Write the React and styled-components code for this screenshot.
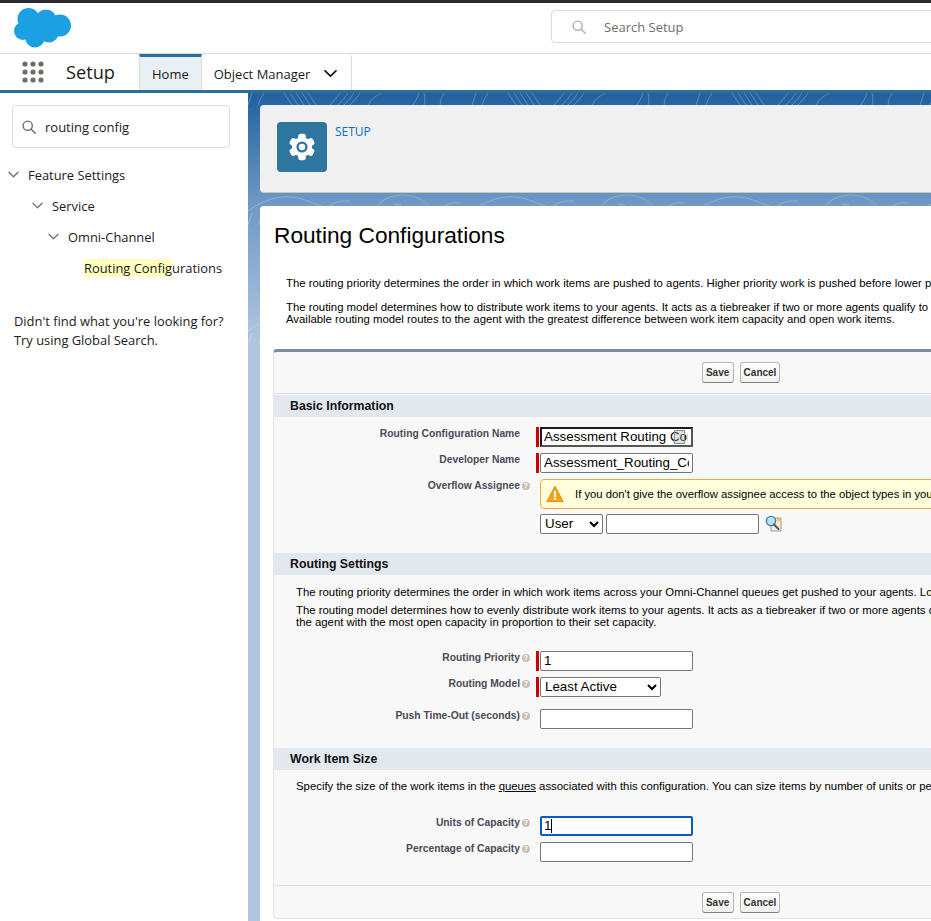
import React from 'react';
import styled, { createGlobalStyle } from 'styled-components';

const GlobalStyle = createGlobalStyle`
  html, body {
    margin: 0;
    padding: 0;
    background: #fff;
  }
`;

const Page = styled.div`
  width: 931px;
  height: 921px;
  overflow: hidden;
  display: flex;
  flex-direction: column;
  font-family: "Open Sans", "Noto Sans", sans-serif;
  color: #1a1a1a;
  border-top: 3px solid #2b2b2f;
  box-sizing: border-box;
`;

const Header = styled.header`
  flex: none;
  height: 50px;
  display: flex;
  align-items: center;
  padding-left: 14px;
  border-bottom: 1px solid #dddbda;
`;

const LogoMark = styled.svg`
  flex: none;
`;

const GlobalSearch = styled.div`
  margin-left: 479px;
  flex: none;
  width: 500px;
  height: 33px;
  box-sizing: border-box;
  margin-top: -3px;
  border: 1px solid #dddbda;
  border-radius: 4px;
  display: flex;
  align-items: center;
  padding-left: 20px;
  gap: 18px;
  font-size: 13px;
  color: #706e6b;
`;

const Nav = styled.nav`
  flex: none;
  height: 36px;
  display: flex;
  border-bottom: 3px solid #2a7099;
`;

const AppLauncher = styled.div`
  width: 139px;
  flex: none;
  display: flex;
  align-items: center;
  padding-left: 22px;
  gap: 22px;
  box-sizing: border-box;
  font-size: 18.2px;
`;

const Tab = styled.div`
  display: flex;
  align-items: center;
  gap: 14px;
  padding: ${p => (p.$active ? '0 12px' : '0 14px 0 12px')};
  font-size: 13px;
  box-sizing: border-box;
  border-right: 1px solid #dddbda;
  border-top: 3px solid ${p => (p.$active ? '#2a7099' : 'transparent')};
  background: ${p => (p.$active ? '#e8f0f4' : '#fff')};
  border-left: ${p => (p.$active ? '1px solid #dddbda' : '0')};
`;

const Body = styled.div`
  flex: 1;
  min-height: 0;
  display: flex;
`;

const Sidebar = styled.aside`
  flex: none;
  width: 248px;
  padding: 12px 18px 0 12px;
  box-sizing: border-box;
  background: #fff;
`;

const TreeSearch = styled.div`
  height: 43px;
  box-sizing: border-box;
  border: 1px solid #dddbda;
  border-radius: 4px;
  display: flex;
  align-items: center;
  gap: 9px;
  padding-left: 9px;
  font-size: 13px;
`;

const Tree = styled.ul`
  list-style: none;
  margin: 11px 0 0 -12px;
  padding: 0;
`;

const TreeItem = styled.li`
  height: 31px;
  display: flex;
  align-items: center;
  font-size: 12.9px;
  padding-left: ${p => p.$indent}px;
  gap: 9px;
`;

const Highlight = styled.mark`
  background: #ffffbe;
  color: inherit;
`;

const NotFound = styled.p`
  margin: 29px 0 0 2px;
  font-size: 12.9px;
  line-height: 19px;
  white-space: nowrap;
`;

const Content = styled.main`
  position: relative;
  flex: 1;
  min-width: 0;
  padding: 12px 0 0 12px;
  background: linear-gradient(#20619f 0, #6f98c4 110px, #b0c6e0 250px, #b0c6e0 100%);
  font-family: "Liberation Sans", Arial, sans-serif;
`;

const Contours = styled.svg`
  position: absolute;
  top: 0;
  left: 0;
  width: 100%;
  height: 250px;
`;

const SetupCard = styled.section`
  position: relative;
  width: 900px;
  height: 88px;
  box-sizing: border-box;
  padding: 17px;
  display: flex;
  gap: 8px;
  background: #f0f0f0;
  border-radius: 4px;
  border-bottom: 1px solid #c9c9c9;
`;

const SetupIcon = styled.div`
  flex: none;
  width: 50px;
  height: 50px;
  border-radius: 4px;
  background: #2e759f;
  display: flex;
  align-items: center;
  justify-content: center;
`;

const SetupLink = styled.a`
  font-size: 12px;
  line-height: 20px;
  color: #0a6fc9;
  font-family: "Open Sans", sans-serif;
`;

const MainCard = styled.section`
  position: relative;
  width: 950px;
  margin-top: 13px;
  padding: 0 0 0 13px;
  background: #fff;
  border-radius: 4px 0 0 0;
  height: 720px;
`;

const Title = styled.h1`
  margin: 0 0 0 1px;
  padding-top: 16px;
  font-size: 22.7px;
  line-height: 27px;
  font-weight: 400;
  color: #000;
`;

const Intro = styled.div`
  padding: 28px 0 0 13px;
  font-size: 11.36px;
  line-height: 12px;
  color: #000;
  white-space: nowrap;
`;

const IntroPara = styled.p`
  margin: 0 0 12px;
`;

const Form = styled.div`
  width: 936px;
  margin-top: 24px;
  height: 570px;
  box-sizing: border-box;
  background: #f8f8f8;
  border: 1px solid #e5e5e5;
  border-top: 3px solid #7b8aa6;
  border-radius: 4px;
`;

const ButtonBar = styled.div`
  display: flex;
  justify-content: center;
  align-items: center;
  gap: 6px;
  height: ${p => p.$height}px;
  margin-top: ${p => p.$top || 0}px;
  border-${p => p.$line}: 1px solid #dcdcdc;
`;

const Button = styled.button`
  height: 21px;
  min-width: 32px;
  padding: 0 3px;
  font: bold 10px "Liberation Sans", Arial, sans-serif;
  color: #333;
  background: linear-gradient(#fff, #f0f0f0);
  border: 1px solid #b5b5b5;
  border-bottom-color: #7f7f7f;
  border-radius: 3px;
`;

const SectionHeader = styled.h2`
  margin: ${p => p.$top}px 0 0;
  height: 22px;
  padding-left: 16px;
  font-size: 12.3px;
  line-height: 22px;
  font-weight: bold;
  color: #111;
  background: #e3e7ee;
`;

const SectionText = styled.div`
  padding: ${p => p.$top}px 0 0 22px;
  font-size: 11.36px;
  line-height: 12px;
  color: #000;
  white-space: nowrap;
`;

const SectionPara = styled.p`
  margin: 0 0 6px;
`;

const QueueLink = styled.span`
  text-decoration: underline;
`;

const Row = styled.div`
  display: grid;
  grid-template-columns: 246px 16px 4px 1fr;
  margin-top: ${p => p.$top}px;
`;

const Label = styled.label`
  padding-top: 1px;
  text-align: right;
  font-size: 10.3px;
  line-height: 12px;
  font-weight: bold;
  color: #4a4a56;
  white-space: nowrap;
`;

const HelpSlot = styled.div`
  padding: 3px 0 0 2px;
`;

const HelpDot = styled.span`
  display: block;
  width: 8px;
  height: 8px;
  border-radius: 50%;
  background: #cbbfae;
  color: #fff;
  font-size: 7px;
  line-height: 8px;
  font-weight: bold;
  text-align: center;
`;

const RequiredBar = styled.div`
  width: 3px;
  margin-left: -0.5px;
  height: 20px;
  background: ${p => (p.$on ? '#c00' : 'transparent')};
`;

const Field = styled.div`
  position: relative;
  display: flex;
  flex-direction: column;
  gap: 5px;
  min-width: 0;
`;

const TextInput = styled.input`
  display: block;
  width: 153px;
  height: 20px;
  box-sizing: border-box;
  font: 13.33px "Liberation Sans", Arial, sans-serif;
  color: #000;
  background: #fff;
  outline: none;
  border: ${p => (p.$focus === 'blue' ? '2px solid #0b5cc0' : p.$focus === 'dark' ? '2px solid #555' : '1px solid #767676')};
  border-top-color: ${p => (p.$focus === 'dark' ? '#1c1c1c' : undefined)};
  border-left-color: ${p => (p.$focus === 'dark' ? '#1c1c1c' : undefined)};
  border-radius: ${p => (p.$focus === 'dark' ? 0 : 2)}px;
  padding: 0 3px 2px ${p => (p.$focus ? 2 : 3)}px;
`;

const Select = styled.select`
  display: block;
  width: ${p => p.$width}px;
  height: 20px;
  box-sizing: border-box;
  padding: 0 0 2px;
  font: 13.33px "Liberation Sans", Arial, sans-serif;
  color: #000;
  background-color: #fff;
  border: 1px solid #767676;
  border-radius: 2px;
`;

const FillBadge = styled.span`
  position: absolute;
  left: 134px;
  top: 3px;
  width: 11px;
  height: 14px;
  box-sizing: border-box;
  border: 1px solid #8d8d8d;
  background: rgba(170, 170, 170, 0.35);
`;

const Caret = styled.span`
  position: absolute;
  left: 11px;
  top: 3px;
  width: 1px;
  height: 14px;
  background: #000;
`;

const Warning = styled.div`
  width: 500px;
  height: 30px;
  box-sizing: border-box;
  display: flex;
  align-items: center;
  gap: 11px;
  padding-left: 5px;
  font-size: 11.3px;
  color: #000;
  white-space: nowrap;
  background: #ffffdc;
  border: 1px solid #f9a43a;
  border-radius: 4px;
`;

const WarningMark = styled.svg`
  flex: none;
`;

const LookupRow = styled.div`
  display: flex;
  align-items: center;
  gap: 3px;
`;

const LookupIcon = styled.svg`
  flex: none;
  margin-left: 3px;
`;

const SearchIcon = ({ size = 14, color = '#706e6b' }) => (
  <svg width={size} height={size} viewBox="0 0 14 14" fill="none" stroke={color} strokeWidth="1.4">
    <circle cx="5.7" cy="5.7" r="4.6" />
    <path d="M9 9l4.2 4.2" strokeLinecap="round" />
  </svg>
);

const Chevron = ({ size = 11, color = '#706e6b', width = 1.3 }) => (
  <svg width={size} height={size} viewBox="0 0 12 12" fill="none" stroke={color} strokeWidth={width}>
    <path d="M1 3.5l5 5 5-5" strokeLinecap="round" strokeLinejoin="round" />
  </svg>
);

const Logo = () => (
  <LogoMark width="58" height="40" viewBox="14 8 58 40" fill="#1ba1e2">
    <circle cx="28.5" cy="19" r="11" />
    <circle cx="46" cy="20" r="10.5" />
    <circle cx="60" cy="25.5" r="11" />
    <circle cx="23" cy="31" r="9" />
    <circle cx="35" cy="37.5" r="10" />
    <circle cx="49" cy="33" r="9.5" />
    <ellipse cx="40" cy="27" rx="16" ry="11" />
  </LogoMark>
);

const Waffle = () => (
  <svg width="22" height="22" viewBox="0 0 22 22" fill="#706e6b">
    {[3, 11, 19].flatMap(y => [3, 11, 19].map(x => <circle key={`${x}-${y}`} cx={x} cy={y} r="2.6" />))}
  </svg>
);

const Gear = () => (
  <svg width="28" height="28" viewBox="0 0 28 28">
    <g fill="#fff">
      {[0, 60, 120, 180, 240, 300].map(a => (
        <rect key={a} x="10.2" y="0.8" width="7.6" height="8" rx="2.6" transform={`rotate(${a} 14 14)`} />
      ))}
      <circle cx="14" cy="14" r="10" />
    </g>
    <circle cx="14" cy="14" r="4.4" fill="none" stroke="#2e759f" strokeWidth="2.4" />
  </svg>
);

const WarningIcon = () => (
  <WarningMark width="18" height="18" viewBox="0 0 18 18">
    <path d="M9 1.2L17.2 16.6H.8z" fill="#f7a11d" stroke="#e98c0c" strokeWidth="1" strokeLinejoin="round" />
    <rect x="8" y="6" width="2" height="6" fill="#fff" />
    <rect x="8" y="13" width="2" height="2" fill="#fff" />
  </WarningMark>
);

const Lookup = () => (
  <LookupIcon width="17" height="18" viewBox="0 0 17 18">
    <path d="M6 3h10v13H6z" fill="#f4efdc" stroke="#9a9a9a" strokeWidth="1" />
    <path d="M12 3h4v3h-4z" fill="#f2c04e" />
    <circle cx="6" cy="6" r="4.6" fill="#bfe0f2" stroke="#3d7fa8" strokeWidth="1.4" />
    <path d="M9 9.5l4.5 4.5" stroke="#555" strokeWidth="2" strokeLinecap="round" />
  </LookupIcon>
);

const Help = () => <HelpDot>?</HelpDot>;

const FormRow = ({ top, label, help, required, children }) => (
  <Row $top={top}>
    <Label>{label}</Label>
    <HelpSlot>{help && <Help />}</HelpSlot>
    <RequiredBar $on={required} />
    <Field>{children}</Field>
  </Row>
);

const Buttons = ({ height, line, top }) => (
  <ButtonBar $height={height} $line={line} $top={top}>
    <Button>Save</Button>
    <Button>Cancel</Button>
  </ButtonBar>
);

export default function App() {
  return (
    <Page>
      <GlobalStyle />
      <Header>
        <Logo />
        <GlobalSearch>
          <SearchIcon color="#b0adab" />
          Search Setup
        </GlobalSearch>
      </Header>
      <Nav>
        <AppLauncher>
          <Waffle />
          Setup
        </AppLauncher>
        <Tab $active>Home</Tab>
        <Tab>
          Object Manager
          <Chevron size={13} color="#1a1a1a" width={1.6} />
        </Tab>
      </Nav>
      <Body>
        <Sidebar>
          <TreeSearch>
            <SearchIcon />
            routing config
          </TreeSearch>
          <Tree>
            <TreeItem $indent={8}><Chevron />Feature Settings</TreeItem>
            <TreeItem $indent={32}><Chevron />Service</TreeItem>
            <TreeItem $indent={48}><Chevron />Omni-Channel</TreeItem>
            <TreeItem $indent={84}><span><Highlight>Routing Config</Highlight>urations</span></TreeItem>
          </Tree>
          <NotFound>
            Didn't find what you're looking for?
            <br />
            Try using Global Search.
          </NotFound>
        </Sidebar>
        <Content>
          <Contours aria-hidden="true">
            <defs>
              <pattern id="contour" width="224" height="120" patternUnits="userSpaceOnUse">
                <g fill="none" stroke="rgba(255,255,255,0.25)" strokeWidth="1">
                  <path d="M4 0q-2 6-4 12M16 0q-4 6-6 12M36 0q4 6 8 12M42 0q4 6 8 12M48 0q4 6 8 12M54 0q4 6 8 12M60 0q4 6 8 12M82 12q6-6 10-12M90 12q6-6 10-12M96 12q6-6 10-12M102 12q6-6 10-12M120 12q4-8 14-12M165 12q4-6 6-12M176 0q2 6 0 12M196 0q-4 6-4 12" />
                  <path d="M0 118q30-22 60-10t50 12M74 120q10-14 28-12M125 120q8-18 30-18t30 18M190 120q6-12 22-10" />
                  <circle cx="150" cy="114" r="3" />
                </g>
              </pattern>
            </defs>
            <rect width="100%" height="100%" fill="url(#contour)" />
          </Contours>
          <SetupCard>
            <SetupIcon><Gear /></SetupIcon>
            <SetupLink>SETUP</SetupLink>
          </SetupCard>
          <MainCard>
            <Title>Routing Configurations</Title>
            <Intro>
              <IntroPara>The routing priority determines the order in which work items are pushed to agents. Higher priority work is pushed before lower priority work.</IntroPara>
              <IntroPara>
                The routing model determines how to distribute work items to your agents. It acts as a tiebreaker if two or more agents qualify to receive the work item.
                <br />
                Available routing model routes to the agent with the greatest difference between work item capacity and open work items.
              </IntroPara>
            </Intro>
            <Form>
              <Buttons height={41} line="bottom" />
              <SectionHeader $top={1}>Basic Information</SectionHeader>
              <FormRow top={10} label="Routing Configuration Name" required>
                <TextInput readOnly $focus="dark" value="Assessment Routing Configuration" />
                <FillBadge />
              </FormRow>
              <FormRow top={6} label="Developer Name" required>
                <TextInput readOnly value="Assessment_Routing_Configuration" />
              </FormRow>
              <FormRow top={6} label="Overflow Assignee" help>
                <Warning>
                  <WarningIcon />
                  If you don't give the overflow assignee access to the object types in your queues, work items can't be routed.
                </Warning>
                <LookupRow>
                  <Select $width={63} defaultValue="User">
                    <option>User</option>
                    <option>Queue</option>
                  </Select>
                  <TextInput readOnly value="" />
                  <Lookup />
                </LookupRow>
              </FormRow>
              <SectionHeader $top={19}>Routing Settings</SectionHeader>
              <SectionText $top={11}>
                <SectionPara>The routing priority determines the order in which work items across your Omni-Channel queues get pushed to your agents. Lower numbers are routed first.</SectionPara>
                <SectionPara>
                  The routing model determines how to evenly distribute work items to your agents. It acts as a tiebreaker if two or more agents qualify for the work item.
                  <br />
                  the agent with the most open capacity in proportion to their set capacity.
                </SectionPara>
              </SectionText>
              <FormRow top={23} label="Routing Priority" help required>
                <TextInput readOnly value="1" />
              </FormRow>
              <FormRow top={6} label="Routing Model" help required>
                <Select $width={121} defaultValue="Least Active">
                  <option>Least Active</option>
                  <option>Most Available</option>
                </Select>
              </FormRow>
              <FormRow top={12} label="Push Time-Out (seconds)" help>
                <TextInput readOnly value="" />
              </FormRow>
              <SectionHeader $top={19}>Work Item Size</SectionHeader>
              <SectionText $top={10}>
                Specify the size of the work items in the <QueueLink>queues</QueueLink> associated with this configuration. You can size items by number of units or percentage of capacity.
              </SectionText>
              <FormRow top={24} label="Units of Capacity" help>
                <TextInput readOnly $focus="blue" value="1" />
                <Caret />
              </FormRow>
              <FormRow top={6} label="Percentage of Capacity" help>
                <TextInput readOnly value="" />
              </FormRow>
              <Buttons height={32} line="top" top={23} />
            </Form>
          </MainCard>
        </Content>
      </Body>
    </Page>
  );
}
